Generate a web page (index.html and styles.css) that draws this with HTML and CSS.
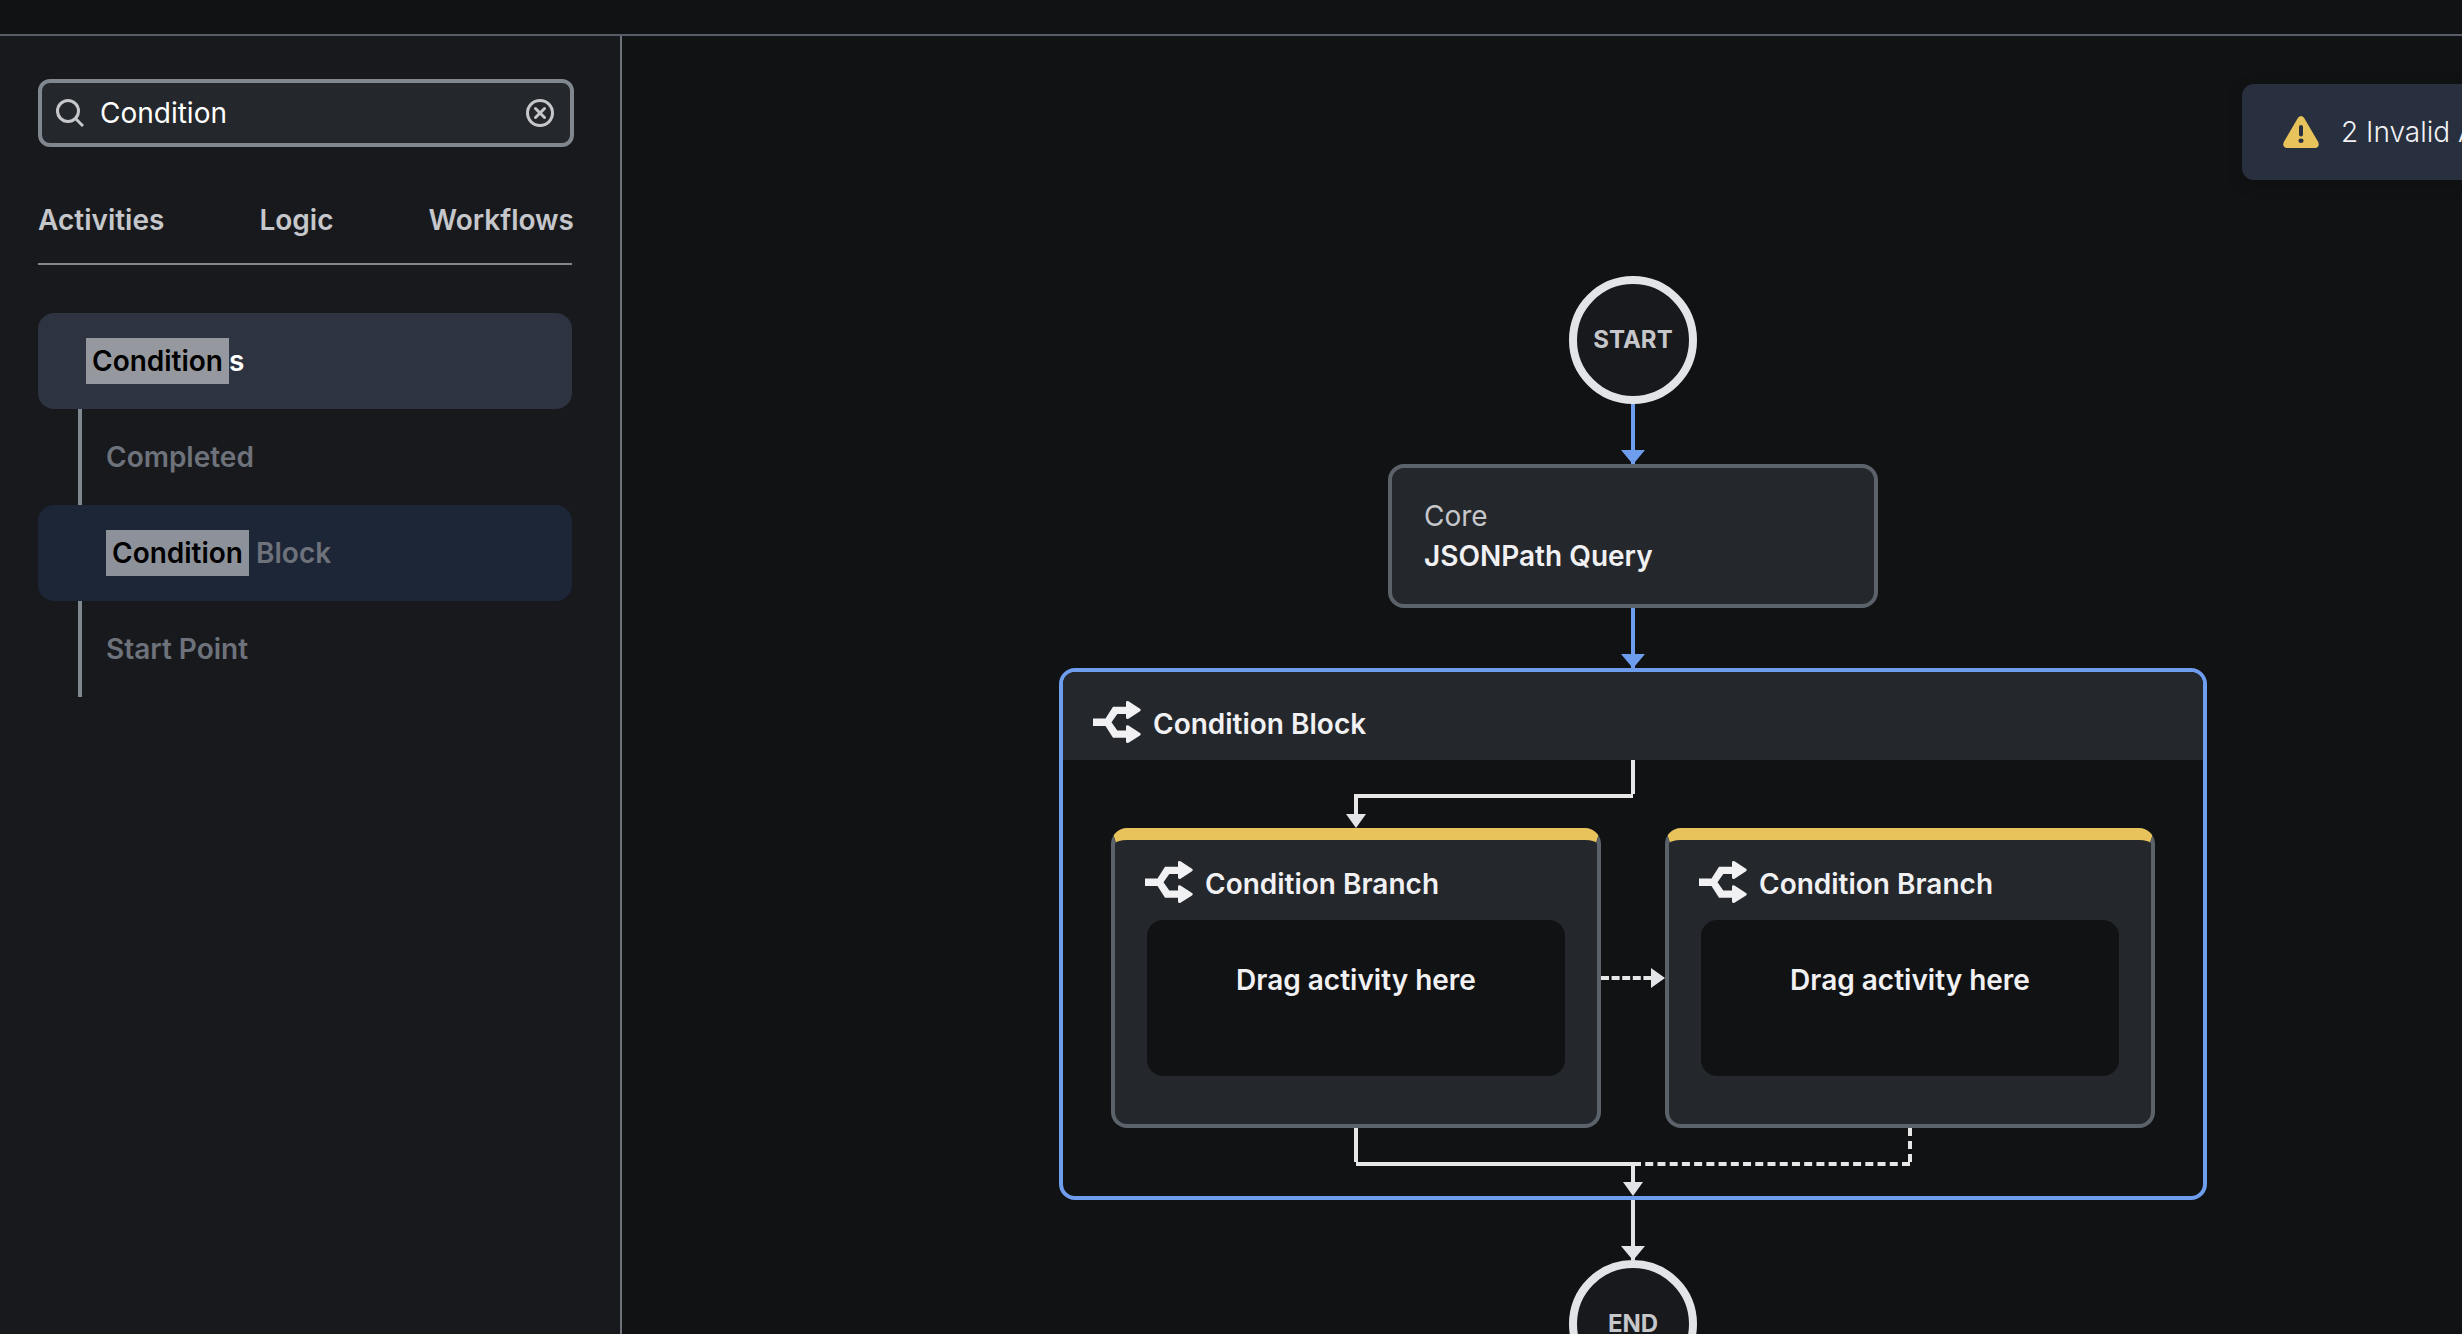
FILE: index.html
```html
<!DOCTYPE html>
<html lang="en">
<head>
<meta charset="utf-8">
<title>Workflow designer</title>
<link rel="stylesheet" href="styles.css">
</head>
<body>
<svg class="defs" aria-hidden="true">
  <symbol id="branch-icon" viewBox="0 0 48 42">
    <path d="M0 17.500H12.500L20 5.700H33V1.500Q33 -0.500 35.500 0.300L47 7.800Q48.500 9 47 10.200L35.500 17.700Q33 18.500 33 16.500V13H24.300L18.500 21.200L24.300 29.400H33V25.800Q33 23.800 35.500 24.600L47 32.100Q48.500 33.300 47 34.500L35.500 41.700Q33 42.500 33 40.500V36.700H20L12.500 25H0z"/>
  </symbol>
</svg>
<div class="app">
  <header class="topbar"></header>
  <div class="workspace">
    <aside class="sidebar">
      <label class="search">
        <svg class="search-icon" viewBox="0 0 28 28" aria-hidden="true"><circle cx="12" cy="12" r="10.500"/><path d="M19.500 19.500L27 27"/></svg>
        <input class="search-input" type="text" value="Condition" aria-label="Search">
        <button class="search-clear" type="button" aria-label="Clear search">
          <svg viewBox="0 0 28 28" aria-hidden="true"><circle cx="14" cy="14" r="12.500"/><path d="M9.500 9.500l9 9M18.500 9.500l-9 9"/></svg>
        </button>
      </label>
      <nav class="tabs">
        <button class="tab" type="button">Activities</button>
        <button class="tab" type="button">Logic</button>
        <button class="tab" type="button">Workflows</button>
      </nav>
      <div class="tree">
        <button class="group" type="button"><span><mark>Condition</mark>s</span></button>
        <ul class="items">
          <li class="item">Completed</li>
          <li class="item item-match"><span><mark>Condition</mark> Block</span></li>
          <li class="item">Start Point</li>
        </ul>
      </div>
    </aside>
    <main class="canvas">
      <div class="stage">
        <div class="toast" role="status">
          <svg class="warning" viewBox="0 0 36 32" aria-hidden="true"><path class="warning-shape" d="M15 1.700Q18 -1.500 21 1.700L35.200 26Q37 31 32.500 32H3.500Q-1 31 0.800 26z"/><path class="warning-mark" d="M18 11v7.500"/><ellipse cx="18" cy="24.800" rx="2.600" ry="2.200"/></svg>
          <span>2 Invalid Activities</span>
        </div>
        <div class="flow">
          <div class="terminal">START</div>
          <svg class="link link-active" viewBox="0 0 24 60" aria-hidden="true"><path d="M10 0h4v46h10L14 58v2h-4v-2L0 46h10z"/></svg>
          <section class="activity">
            <p class="activity-group">Core</p>
            <h2 class="title">JSONPath Query</h2>
          </section>
          <svg class="link link-active" viewBox="0 0 24 60" aria-hidden="true"><path d="M10 0h4v46h10L14 58v2h-4v-2L0 46h10z"/></svg>
          <section class="block">
            <div class="block-head">
              <svg class="branch-icon" aria-hidden="true"><use href="#branch-icon"/></svg>
              <h2 class="title">Condition Block</h2>
            </div>
            <div class="block-body">
              <svg class="wires" viewBox="0 0 1044 68" aria-hidden="true">
                <path class="wire" d="M522 0v34M522 36H243M245 34v20"/>
                <path class="head" d="M235 54h20l-10 14z"/>
              </svg>
              <div class="branches">
                <section class="branch">
                  <div class="branch-head">
                    <svg class="branch-icon" aria-hidden="true"><use href="#branch-icon"/></svg>
                    <h3 class="title">Condition Branch</h3>
                  </div>
                  <div class="dropzone">Drag activity here</div>
                </section>
                <svg class="next" viewBox="0 0 64 20" aria-hidden="true">
                  <path class="wire wire-next" d="M0 10h51"/>
                  <path class="head" d="M50 0v20l14-10z"/>
                </svg>
                <section class="branch">
                  <div class="branch-head">
                    <svg class="branch-icon" aria-hidden="true"><use href="#branch-icon"/></svg>
                    <h3 class="title">Condition Branch</h3>
                  </div>
                  <div class="dropzone">Drag activity here</div>
                </section>
              </div>
              <svg class="wires" viewBox="0 0 1044 68" aria-hidden="true">
                <path class="wire" d="M245 0v34M245 36H522M522 38v16"/>
                <path class="wire wire-down" d="M799 0v34"/>
                <path class="wire wire-across" d="M522 36H799"/>
                <path class="head" d="M512 54h20l-10 14z"/>
              </svg>
            </div>
          </section>
          <svg class="link" viewBox="0 0 24 60" aria-hidden="true"><path d="M10 0h4v46h10L14 58v2h-4v-2L0 46h10z"/></svg>
          <div class="terminal">END</div>
        </div>
      </div>
    </main>
  </div>
</div>
</body>
</html>
```

FILE: styles.css
```css
* {
  box-sizing: border-box;
}

body {
  margin: 0;
  background: #111214;
  color: #f1f1f3;
  font-family: Inter, "Liberation Sans", sans-serif;
  font-size: 28px;
  line-height: 40px;
}

button,
input {
  margin: 0;
  padding: 0;
  border: 0;
  background: none;
  color: inherit;
  font: inherit;
}

svg {
  display: block;
  flex: none;
}

h2,
h3,
p,
ul {
  margin: 0;
  padding: 0;
}

.defs {
  position: absolute;
  width: 0;
  height: 0;
}

.app {
  display: flex;
  flex-direction: column;
  height: 100vh;
  overflow: hidden;
}

.topbar {
  flex: none;
  height: 36px;
  border-bottom: 2px solid #575d67;
}

.workspace {
  display: flex;
  flex: 1;
  min-height: 0;
}

/* Sidebar */

.sidebar {
  flex: none;
  width: 622px;
  padding: 43px 46px 0 38px;
  border-right: 2px solid #6c737b;
  background: #18191d;
}

.search {
  display: flex;
  align-items: center;
  gap: 16px;
  height: 68px;
  padding: 0 16px 0 14px;
  border: 4px solid #80878e;
  border-radius: 12px;
  background: #24272c;
  color: #fff;
}

.search-icon,
.search-clear svg {
  width: 28px;
  height: 28px;
  fill: none;
  stroke: #c6c7cb;
  stroke-width: 3;
}

.search-clear svg path {
  stroke-linecap: round;
}

.search-input {
  flex: 1;
  min-width: 0;
  outline: none;
}

.tabs {
  display: flex;
  justify-content: space-between;
  padding: 53px 0 23px;
  color: #c6c7cb;
}

.tab,
.group,
.item,
.title,
.dropzone {
  font-weight: 600;
}

.tree {
  margin-right: 2px;
  padding-top: 48px;
  border-top: 2px solid #80878e;
}

.group,
.item {
  display: flex;
  align-items: center;
  width: 100%;
  height: 96px;
  border-radius: 16px;
}

.group {
  padding-left: 48px;
  background: #2d3340;
  color: #fff;
}

.items {
  background: linear-gradient(#80878e, #80878e) 40px 0 / 4px 100% no-repeat;
  list-style: none;
}

.item {
  padding-left: 68px;
  color: #6d727b;
}

.item-match {
  background: #1d2637;
}

mark {
  display: inline-block;
  padding: 3px 6px;
  background: #96989f;
  color: #000;
}

.item-match mark {
  background: #8d929a;
}

/* Canvas */

.canvas {
  flex: 1;
  min-width: 0;
  overflow: hidden;
}

/* The stage runs past the right edge of the viewport. */
.stage {
  display: flex;
  flex-direction: column;
  gap: 96px;
  width: calc(100% + 182px);
  padding-top: 48px;
}

.toast {
  display: flex;
  align-self: flex-end;
  align-items: center;
  gap: 22px;
  width: 370px;
  height: 96px;
  margin-right: 32px;
  padding-left: 41px;
  border-radius: 12px;
  background: #28303f;
  box-shadow: 0 4px 16px rgba(0, 0, 0, 0.2);
  font-weight: 300;
  white-space: nowrap;
}

.warning {
  width: 36px;
  height: 32px;
  fill: #28303f;
}

.warning-shape {
  fill: #e8c35c;
}

.warning-mark {
  stroke: #28303f;
  stroke-width: 4;
  stroke-linecap: round;
}

.flow {
  display: flex;
  flex-direction: column;
  align-items: center;
}

.terminal {
  display: flex;
  align-items: center;
  justify-content: center;
  width: 128px;
  height: 128px;
  border: 8px solid #e3e4e8;
  border-radius: 50%;
  background: #18191d;
  color: #c6c7cb;
  font-size: 24px;
  font-weight: 700;
}

.link {
  width: 24px;
  height: 60px;
  fill: #e3e4e8;
}

.link-active {
  fill: #6f9ded;
}

.title {
  font-size: 28px;
}

.activity {
  width: 490px;
  padding: 28px 32px;
  border: 4px solid #5b626a;
  border-radius: 16px;
  background: #24272c;
}

.activity-group {
  color: #c6c7cb;
}

.block {
  overflow: hidden;
  border: 4px solid #6f9ded;
  border-radius: 16px;
}

.block-head,
.branch-head {
  display: flex;
  align-items: center;
  gap: 12px;
}

.block-head {
  height: 88px;
  padding: 32px 30px 16px;
  background: #24272c;
}

.branch-head {
  height: 80px;
  padding: 24px 30px 16px;
}

.branch-icon {
  width: 48px;
  height: 42px;
  margin-bottom: 4px;
  fill: #f1f1f3;
}

.block-body {
  padding: 0 48px;
}

.wires {
  width: 1044px;
  height: 68px;
}

.wire {
  fill: none;
  stroke: #e6e7e6;
  stroke-width: 4;
}

.wire-next {
  stroke-dasharray: 8 2.6;
}

.wire-down {
  stroke-dasharray: 8 5;
}

.wire-across {
  stroke-dasharray: 8 4.227;
}

.head {
  fill: #e3e4e8;
}

.branches {
  display: flex;
  align-items: center;
}

.branch {
  width: 490px;
  padding-bottom: 48px;
  border: 4px solid #5b626a;
  border-top: 12px solid #e8c35c;
  border-radius: 16px;
  background: #24272c;
}

.dropzone {
  height: 156px;
  margin: 0 32px;
  padding-top: 40px;
  border-radius: 16px;
  background: #111214;
  text-align: center;
}

.next {
  width: 64px;
  height: 20px;
}
```
